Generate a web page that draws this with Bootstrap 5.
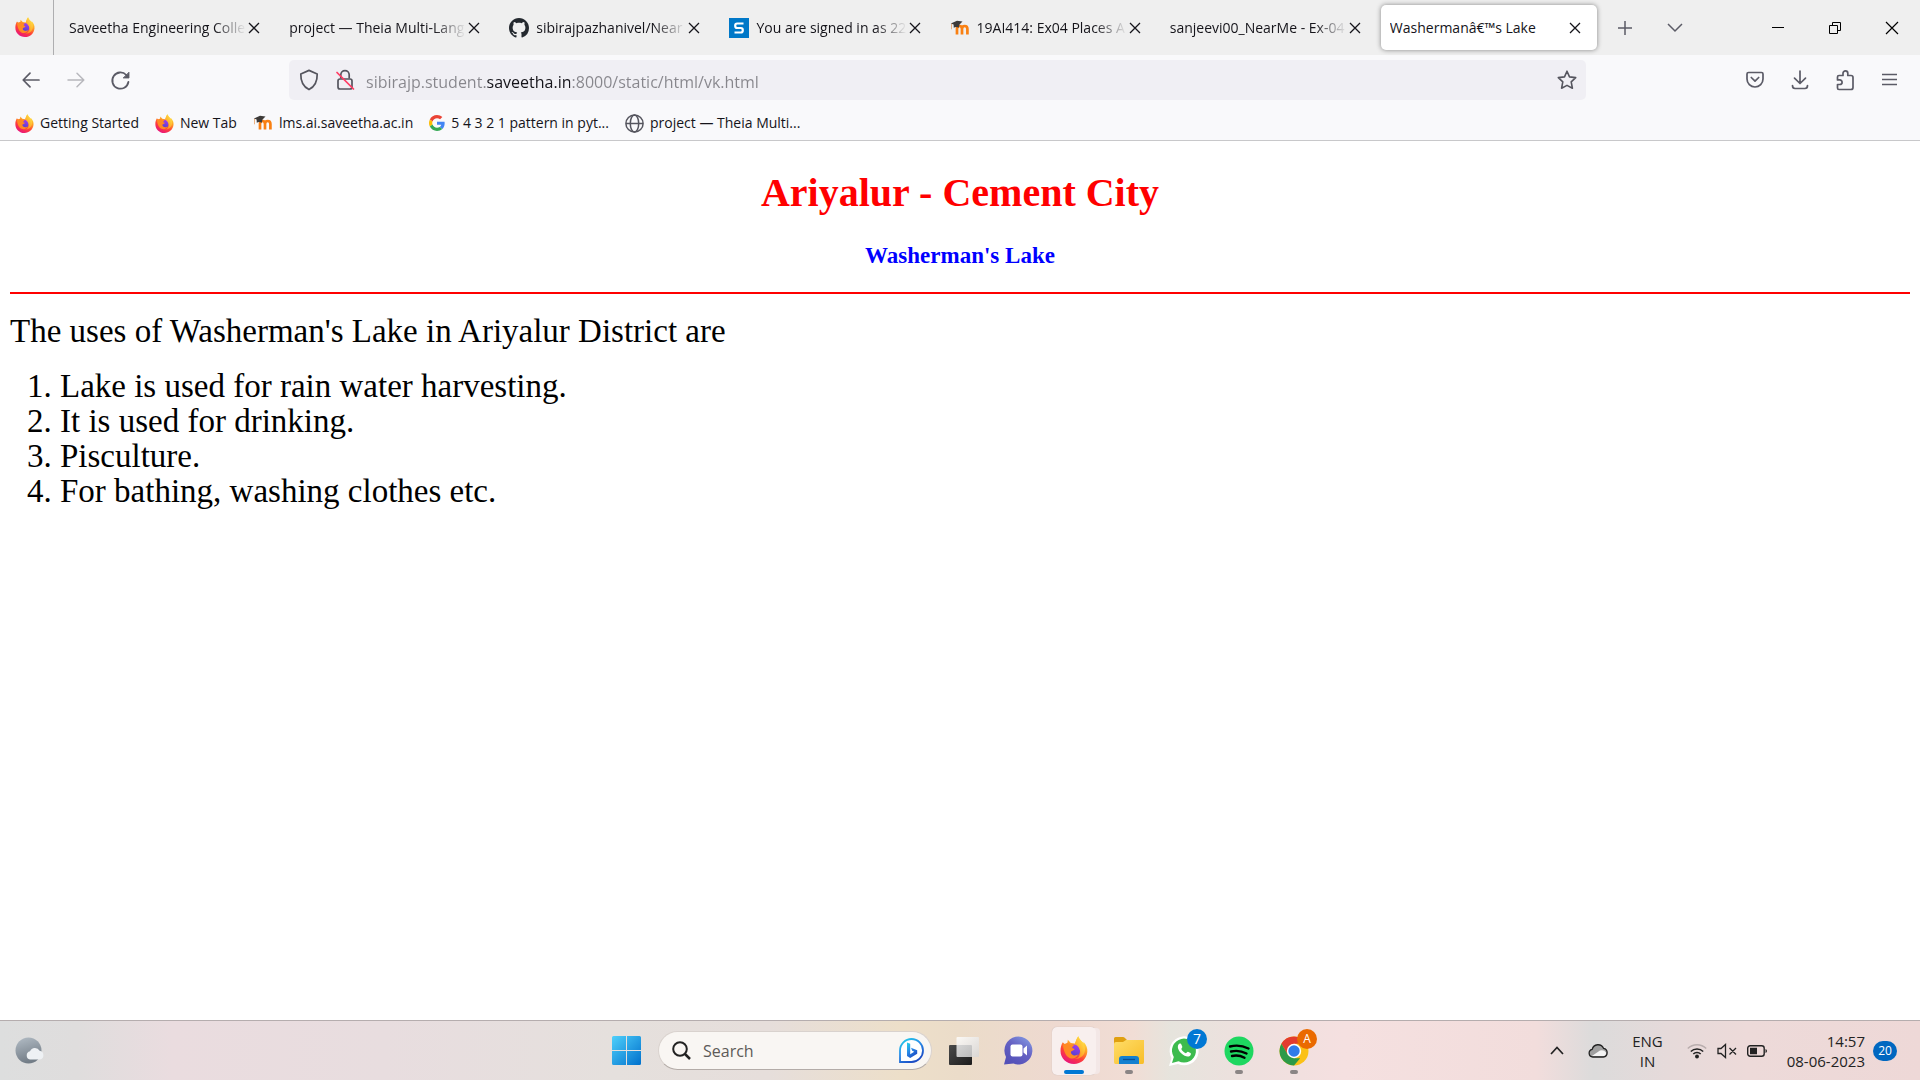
<!DOCTYPE html>
<html lang="en">
<head>
<meta charset="utf-8">
<meta name="viewport" content="width=device-width, initial-scale=1">
<title>Washerman's Lake</title>
<link href="https://cdn.jsdelivr.net/npm/bootstrap@5.3.0/dist/css/bootstrap.min.css" rel="stylesheet">
<style>
  body { font-family: "Open Sans", "Noto Sans", sans-serif; font-size: 14px; line-height: 20px; color: #15141a; background: #fff; }
  svg { display: block; flex: none; overflow: visible; }
  button { font: inherit; color: inherit; background: none; border: 0; padding: 0; }

  /* tab strip */
  .tabstrip { background: #efefef; height: 55px; }
  .pinned-tab { width: 54px; border-right: 1px solid #aeaeb0; padding-right: 13px; padding-left: 15px; }
  .tab-row { flex: 1 1 0; max-width: 1543px; padding-left: 6px; gap: 4px; min-width: 0; }
  .browser-tab { flex: 1 1 0; min-width: 0; height: 45px; padding: 0 14px 0 9px; border-radius: 5px; }
  .browser-tab a { color: inherit; text-decoration: none; gap: 7px; min-width: 0; }
  .tab-title { flex: 1 1 0; min-width: 0; overflow: hidden; white-space: nowrap; }
  .faded { -webkit-mask-image: linear-gradient(to left, transparent, #000 32px); mask-image: linear-gradient(to left, transparent, #000 32px); }
  .is-current { background: #fff; box-shadow: 0 0 5px rgba(0,0,0,.45); }
  .tab-close { width: 16px; height: 24px; }
  .strip-btn { width: 44px; height: 45px; margin-left: 6px; color: #5b5b66; }
  .win-btn { width: 57px; height: 45px; }

  /* navigation and bookmarks */
  .chrome-bars { background: #f9f9fb; border-bottom: 1px solid #c8c8ca; color: #5b5b66; }
  .nav-row { padding: 5px 8px; height: 50px; }
  .tool-btn { width: 45px; height: 40px; }
  .bar-space { flex: 0 1 146px; }
  .url-box { flex: 1 1 0; background: #f0eff4; border-radius: 5px; height: 40px; padding: 0 9px; }
  .url-input { border: 0; outline: 0; font-size: 16px; line-height: 24px; padding: 0; height: 24px; min-width: 0; margin-top: 3px; margin-left: 12px;
    background: linear-gradient(to right, #87868c 0 121px, #15141a 121px 204px, #87868c 204px); -webkit-background-clip: text; background-clip: text; color: transparent; }
  .bookmark-row { height: 35px; padding: 1px 15px 0; gap: 16px; }
  .bookmark-row a { color: #15141a; text-decoration: none; gap: 6px; white-space: nowrap; }

  /* page */
  .site-page { font-family: "Liberation Serif", serif; padding: 29px 10px; color: #000; }
  .page-heading { font-size: 40px; line-height: 46px; font-weight: 700; color: #f00; margin: 0 0 26px; }
  .page-subheading { font-size: 23px; line-height: 27px; font-weight: 700; color: #00f; margin: 0 0 23px; }
  .page-rule { border: 0; height: 2px; background: #f00; opacity: 1; margin: 0 0 20px; }
  .page-copy { font-size: 33px; line-height: 35px; margin: 0 0 20px; }
  .page-copy ol { padding-left: 50px; margin: 0; }

  /* taskbar */
  .taskbar { height: 60px; border-top: 1px solid #b5adae; color: #222;
    background: linear-gradient(to right, #dddede 0, #dfdddd 4%, #eadcdf 9%, #e8dddf 20%, #e5e0dd 32%, #e6dedb 40%, #eddfc9 47%, #ebdcc9 50%, #eed9d0 55%, #f1ddd5 59%, #e6e4dd 61%, #eee0de 65%, #f5e0e0 70%, #f2dddc 80%, #dcdbdb 83%, #e6dada 87%, #eddad9 91%, #eed8d7 100%); }
  .side-zone { flex: 1 1 0; min-width: 0; }
  .task-slot { width: 55px; height: 59px; position: relative; }
  .open-dot::after { content: ""; position: absolute; left: 24px; bottom: 6px; width: 8px; height: 4px; border-radius: 2px; background: #8b8585; }
  .task-current .task-tile { width: 44px; height: 48px; border-radius: 5px; background: #f8efee; box-shadow: 5px 0 0 -1px #f3e7e6, 0 0 1px #b9aaaa; }
  .task-current::after { content: ""; position: absolute; left: 18px; bottom: 6px; width: 20px; height: 4px; border-radius: 2px; background: #0078d4; }
  .search-pill { width: 274px; height: 39px; border-radius: 20px; background: #f9f6f3; border: 1px solid #d9d2ce; border-bottom-color: #b4aca8; padding: 0 7px 0 13px; margin: 0 4px 0 4px; }
  .search-field { border: 0; outline: 0; background: none; min-width: 0; padding: 0; margin-left: 12px; font-size: 16px; line-height: 24px; }
  .search-field::placeholder { color: #5d5a58; opacity: 1; }
  .count-badge { position: absolute; right: 4px; top: 8px; width: 20px; height: 20px; border-radius: 50%; color: #fff; background: #0078d4; font-size: 14px; line-height: 20px; text-align: center; }
  .profile-badge { background: #ea6a00; font-size: 12px; }
  .tray-btn { height: 59px; }
  .tray-label { font-size: 15px; }
  .status-icons { gap: 10px; margin-right: 20px; }
  .notice-count { margin-right: 23px; width: 24px; height: 20px; border-radius: 10px; background: #0067c0; color: #fff; font-size: 12px; line-height: 20px; }
</style>
<script src="https://cdn.jsdelivr.net/npm/bootstrap@5.3.0/dist/js/bootstrap.bundle.min.js"></script>
</head>
<body class="d-flex flex-column min-vh-100">

<svg width="0" height="0" class="position-absolute" aria-hidden="true">
  <defs>
    <linearGradient id="ffBody" x1=".8" y1=".05" x2=".3" y2="1"><stop offset="0" stop-color="#fff44f"/><stop offset=".35" stop-color="#ffa024"/><stop offset=".65" stop-color="#ff4038"/><stop offset="1" stop-color="#e7127f"/></linearGradient>
    <linearGradient id="ffCore" x1=".7" y1="0" x2=".3" y2="1"><stop offset="0" stop-color="#a43cf0"/><stop offset="1" stop-color="#4a42c8"/></linearGradient>
    <linearGradient id="ffTail" x1="1" y1="0" x2=".3" y2="1"><stop offset="0" stop-color="#fff44f"/><stop offset="1" stop-color="#ff8a1c"/></linearGradient>
    <linearGradient id="winBlue" gradientUnits="userSpaceOnUse" x1="0" y1="0" x2="29" y2="29"><stop offset="0" stop-color="#4fd0fb"/><stop offset="1" stop-color="#0070cc"/></linearGradient>
    <linearGradient id="bingBlue" x1="0" y1="0" x2=".6" y2="1"><stop offset="0" stop-color="#21d3e8"/><stop offset=".5" stop-color="#2a8ce8"/><stop offset="1" stop-color="#1b4bc4"/></linearGradient>
    <linearGradient id="chatPurple" x1="1" y1="0" x2=".3" y2="1"><stop offset="0" stop-color="#88a4e8"/><stop offset=".5" stop-color="#6662c4"/><stop offset="1" stop-color="#5350b8"/></linearGradient>
    <linearGradient id="folderGold" x1="0" y1="0" x2="1" y2="1"><stop offset="0" stop-color="#ffdd68"/><stop offset="1" stop-color="#f8bd28"/></linearGradient>
    <linearGradient id="moonGrey" x1="0" y1="0" x2=".3" y2="1"><stop offset="0" stop-color="#b3bdc6"/><stop offset="1" stop-color="#737d87"/></linearGradient>
    <linearGradient id="darkPane" x1="0" y1="0" x2="1" y2="1"><stop offset="0" stop-color="#4a4a4a"/><stop offset="1" stop-color="#1c1c1c"/></linearGradient>
    <linearGradient id="lightPane" x1="0" y1="0" x2="1" y2="1"><stop offset="0" stop-color="#fff"/><stop offset="1" stop-color="#d6d6d6"/></linearGradient>
    <symbol id="firefox" viewBox="0 0 28 28">
      <path fill="url(#ffBody)" d="M2.8 6.2 5 8.4l2.5-1.9.3-2.7 3 3.2 4.2.6C16 5 16.500 2.500 18.300.200c.8 2.400 2.200 3.900 4 5.700l1.200 1.500V5.800c3 3.400 4.200 6.300 3.800 10.200C26.600 23 21 28 14 28 6.400 28 .5 22.300.5 15c0-3.400.8-6.500 2.300-8.800z"/>
      <circle cx="13.800" cy="14.800" r="6.300" fill="url(#ffCore)"/>
      <path fill="url(#ffTail)" d="M15 7.600C16 5 16.500 2.500 18.300.200c.8 2.400 2.200 3.900 4 5.700 2.500 3 3.400 6.600 2.300 10.400-1.200 4.300-5.400 7-10 6.600 4.500-1 6.500-4.600 5.400-8.500-.7-2.600-2.200-4.300-5-6.800z"/>
      <path fill="#ff8a22" d="M3 8.800c2.200-1.800 5.300-1.700 7.400.1 1.600-.5 3-.3 4 .3-1.300.5-1.900 1.300-2.300 2.500.5 1 2.300.8 2.500 1.500-.5 1.200-2.600 1.400-3.500 2.400-.8 1 .4 3 2.300 3.700 2.200.7 3.700-.4 4.800-1-1 3.500-5 5.200-8.700 3.600C5.600 20.200 3.400 14.600 3 8.800z"/>
    </symbol>
    <symbol id="moodle" viewBox="0 0 20 20">
      <path d="M7 16.500v-5.500q0-3 2.500-3t2.500 3v5.500m0-5.500q0-3 2.700-3t2.700 3v5.500" fill="none" stroke="#f98012" stroke-width="2.700"/>
      <path d="M.8 5.500 7 2.800l5.500.7-3 3-.8 3.200c-2-.9-3.500-.8-4.900.1l-.2-3.200z" fill="#3d3a38"/><path d="M1.500 5.800v5.500" stroke="#e6a066" stroke-width=".8"/>
    </symbol>
    <symbol id="cross" viewBox="0 0 12 12"><path d="m1 1 10 10M11 1 1 11" stroke="#15141a" stroke-width="1.300" fill="none"/></symbol>
  </defs>
</svg>

<header>
  <div class="tabstrip d-flex align-items-center">
    <a href="#" class="pinned-tab d-flex align-items-center align-self-stretch" aria-label="Firefox View"><svg width="20" height="24"><use href="#firefox" width="20" height="20" y="1"/></svg></a>
    <nav class="tab-row d-flex" aria-label="Tabs">
      <div class="browser-tab d-flex align-items-center"><a href="#" class="d-flex align-items-center flex-grow-1"><span class="tab-title faded">Saveetha Engineering Colle</span></a><button class="tab-close d-flex align-items-center justify-content-center" aria-label="Close tab"><svg width="12" height="12"><use href="#cross"/></svg></button></div>
      <div class="browser-tab d-flex align-items-center"><a href="#" class="d-flex align-items-center flex-grow-1"><span class="tab-title faded">project — Theia Multi-Lang</span></a><button class="tab-close d-flex align-items-center justify-content-center" aria-label="Close tab"><svg width="12" height="12"><use href="#cross"/></svg></button></div>
      <div class="browser-tab d-flex align-items-center"><a href="#" class="d-flex align-items-center flex-grow-1"><svg width="20" height="20" viewBox="0 0 16 16"><path fill="#24292f" d="M8 0C3.580 0 0 3.580 0 8c0 3.540 2.290 6.530 5.470 7.590.4.070.55-.17.55-.38 0-.19-.01-.82-.01-1.490-2.010.37-2.530-.49-2.690-.94-.09-.23-.48-.94-.82-1.130-.28-.15-.68-.52-.01-.53.63-.01 1.080.58 1.230.82.72 1.210 1.870.87 2.330.66.07-.52.28-.87.51-1.070-1.780-.2-3.640-.89-3.640-3.950 0-.87.31-1.590.82-2.150-.08-.2-.36-1.020.08-2.120 0 0 .67-.21 2.200.82.64-.18 1.320-.27 2-.27s1.360.09 2 .27c1.530-1.040 2.200-.82 2.200-.82.44 1.100.16 1.920.08 2.120.51.56.82 1.270.82 2.150 0 3.070-1.870 3.750-3.650 3.950.29.25.54.73.54 1.480 0 1.070-.01 1.930-.01 2.200 0 .21.15.46.55.38A8.010 8.010 0 0 0 16 8c0-4.420-3.580-8-8-8z"/></svg><span class="tab-title faded">sibirajpazhanivel/Near</span></a><button class="tab-close d-flex align-items-center justify-content-center" aria-label="Close tab"><svg width="12" height="12"><use href="#cross"/></svg></button></div>
      <div class="browser-tab d-flex align-items-center"><a href="#" class="d-flex align-items-center flex-grow-1"><svg width="20" height="20" viewBox="0 0 20 20"><path fill="#0078c8" d="M0 0h20v20H0z"/><path d="M14.500 5.500H8.200q-2 0-2 2.200T8.200 10h3.600q2 0 2 2.200t-2 2.300H5.500" fill="none" stroke="#fff" stroke-width="2.200"/></svg><span class="tab-title faded">You are signed in as 22</span></a><button class="tab-close d-flex align-items-center justify-content-center" aria-label="Close tab"><svg width="12" height="12"><use href="#cross"/></svg></button></div>
      <div class="browser-tab d-flex align-items-center"><a href="#" class="d-flex align-items-center flex-grow-1"><svg width="20" height="20"><use href="#moodle"/></svg><span class="tab-title faded">19AI414: Ex04 Places A</span></a><button class="tab-close d-flex align-items-center justify-content-center" aria-label="Close tab"><svg width="12" height="12"><use href="#cross"/></svg></button></div>
      <div class="browser-tab d-flex align-items-center"><a href="#" class="d-flex align-items-center flex-grow-1"><span class="tab-title faded">sanjeevi00_NearMe - Ex-04</span></a><button class="tab-close d-flex align-items-center justify-content-center" aria-label="Close tab"><svg width="12" height="12"><use href="#cross"/></svg></button></div>
      <div class="browser-tab is-current d-flex align-items-center"><a href="#" class="d-flex align-items-center flex-grow-1" aria-current="page"><span class="tab-title">Washermanâ€™s Lake</span></a><button class="tab-close d-flex align-items-center justify-content-center" aria-label="Close tab"><svg width="12" height="12"><use href="#cross"/></svg></button></div>
    </nav>
    <button class="strip-btn d-flex align-items-center justify-content-center" aria-label="New tab"><svg width="16" height="16" viewBox="0 0 16 16"><path d="M8 1v14M1 8h14" stroke="currentColor" stroke-width="1.500"/></svg></button>
    <button class="strip-btn d-flex align-items-center justify-content-center" aria-label="List all tabs"><svg width="16" height="16" viewBox="0 0 16 16"><path d="m1 4 7 7 7-7" fill="none" stroke="currentColor" stroke-width="1.500"/></svg></button>
    <div class="d-flex ms-auto">
      <button class="win-btn d-flex align-items-center justify-content-center" aria-label="Minimize"><svg width="12" height="12" viewBox="0 0 12 12"><path d="M0 5.500h12" stroke="#000"/></svg></button>
      <button class="win-btn d-flex align-items-center justify-content-center" aria-label="Restore"><svg width="12" height="12" viewBox="0 0 12 12"><path d="M.5 3.500h8v8h-8zM3.500 3V.5h8v8H9" fill="none" stroke="#000"/></svg></button>
      <button class="win-btn d-flex align-items-center justify-content-center" aria-label="Close"><svg width="14" height="14" viewBox="0 0 14 14"><path d="m1 1 12 12M13 1 1 13" stroke="#000" stroke-width="1.200"/></svg></button>
    </div>
  </div>

  <div class="chrome-bars">
    <div class="nav-row d-flex align-items-center">
      <button class="tool-btn d-flex align-items-center justify-content-center" aria-label="Back"><svg width="18" height="16" viewBox="0 0 18 16" fill="none" stroke="currentColor" stroke-width="1.700" stroke-linecap="round" stroke-linejoin="round"><path d="M17 8H1.500M8 1.200 1.200 8 8 14.800"/></svg></button>
      <button class="tool-btn d-flex align-items-center justify-content-center opacity-50" aria-label="Forward"><svg width="18" height="16" viewBox="0 0 18 16" fill="none" stroke="#77777f" stroke-width="1.500" stroke-linecap="round" stroke-linejoin="round"><path d="M1 8h15.500M10 1.200 16.800 8 10 14.800"/></svg></button>
      <button class="tool-btn d-flex align-items-center justify-content-center" aria-label="Reload"><svg width="19" height="19" viewBox="0 0 19 19" fill="none" stroke="currentColor" stroke-width="1.800" stroke-linecap="round"><path d="M17.400 11A8.100 8.100 0 1 1 15.300 4"/><path d="M18 1.500V7h-5.500z" fill="currentColor" stroke-width=".8"/></svg></button>
      <div class="bar-space"></div>
      <div class="url-box d-flex align-items-center">
        <button aria-label="Tracking protection"><svg width="22" height="22" viewBox="0 0 22 22" fill="none" stroke="#55555e" stroke-width="1.700" stroke-linejoin="round"><path d="M11 1.400 19.200 5c.2 6.500-2.200 12.500-8.200 15.600C5 17.500 2.600 11.500 2.800 5z"/></svg></button>
        <button class="ms-3" aria-label="Connection not secure"><svg width="18" height="22" viewBox="0 0 18 22" fill="none" stroke="#55555e" stroke-width="1.700"><rect x="2" y="10" width="14" height="10" rx="2"/><path d="M4.800 9.500V5.800a4.200 4.200 0 0 1 8.400 0v3.700"/><path d="M1 3.500 17.500 20" stroke="#ff3b62" stroke-linecap="round"/></svg></button>
        <label class="visually-hidden" for="address">Address</label>
        <input id="address" class="url-input flex-grow-1" type="text" value="sibirajp.student.saveetha.in:8000/static/html/vk.html">
        <button aria-label="Bookmark this page"><svg width="20" height="20" viewBox="0 0 20 20" fill="none" stroke="#55555e" stroke-width="1.600" stroke-linejoin="round"><path d="m10 1.200 2.500 5.700 6.200.7-4.500 4.200 1.200 6.400L10 15.400l-5.400 2.800 1.200-6.400-4.500-4.200 6.200-.7z"/></svg></button>
      </div>
      <div class="bar-space"></div>
      <button class="tool-btn d-flex align-items-center justify-content-center" aria-label="Save to Pocket"><svg width="18" height="18" viewBox="0 0 18 18" fill="none" stroke="currentColor" stroke-width="1.700" stroke-linecap="round" stroke-linejoin="round"><path d="M2.500 1.500h13q1.500 0 1.500 1.500v5a8 8 0 0 1-16 0V3q0-1.500 1.500-1.500z"/><path d="m5.300 6.500 3.700 3.700 3.700-3.700"/></svg></button>
      <button class="tool-btn d-flex align-items-center justify-content-center" aria-label="Downloads"><svg width="18" height="20" viewBox="0 0 18 20" fill="none" stroke="currentColor" stroke-width="1.700" stroke-linecap="round" stroke-linejoin="round"><path d="M9 1v12M3.500 8.200 9 13.500l5.500-5.300M1.500 15.500q0 3 2.500 3h10q2.500 0 2.500-3"/></svg></button>
      <button class="tool-btn d-flex align-items-center justify-content-center" aria-label="Extensions"><svg width="18" height="20" viewBox="0 0 18 20" fill="none" stroke="currentColor" stroke-width="1.700" stroke-linejoin="round"><path d="M7 5.500V3.300a2.400 2.400 0 0 1 4.800 0v2.200H15q2 0 2 2v10q0 2-2 2H3q-1.500 0-1.500-1.500v-3.500h2.300a2.300 2.300 0 0 0 0-4.600H1.500V7Q1.500 5.500 3 5.500z"/></svg></button>
      <button class="tool-btn d-flex align-items-center justify-content-center" aria-label="Open menu"><svg width="15" height="14" viewBox="0 0 15 14" stroke="currentColor" stroke-width="1.500"><path d="M0 1.500h15M0 6.500h15M0 11.500h15"/></svg></button>
    </div>

    <nav class="bookmark-row d-flex align-items-center" aria-label="Bookmarks">
      <a href="#" class="d-flex align-items-center"><svg width="19" height="19"><use href="#firefox"/></svg>Getting Started</a>
      <a href="#" class="d-flex align-items-center"><svg width="19" height="19"><use href="#firefox"/></svg>New Tab</a>
      <a href="#" class="d-flex align-items-center"><svg width="20" height="20"><use href="#moodle"/></svg>lms.ai.saveetha.ac.in</a>
      <a href="#" class="d-flex align-items-center"><svg width="16" height="16" viewBox="0 0 48 48"><path fill="#ea4335" d="M24 9.500c3.540 0 6.710 1.220 9.210 3.600l6.850-6.850C35.900 2.380 30.470 0 24 0 14.620 0 6.510 5.380 2.560 13.220l7.980 6.190C12.430 13.720 17.740 9.500 24 9.500z"/><path fill="#4285f4" d="M46.980 24.550c0-1.570-.15-3.090-.38-4.550H24v9.020h12.940c-.58 2.960-2.260 5.480-4.780 7.180l7.730 6c4.510-4.180 7.090-10.360 7.090-17.650z"/><path fill="#fbbc05" d="M10.530 28.590A14.500 14.500 0 0 1 9.770 24c0-1.600.27-3.140.76-4.590l-7.980-6.190A23.900 23.900 0 0 0 0 24c0 3.880.92 7.540 2.560 10.780z"/><path fill="#34a853" d="M24 48c6.480 0 11.930-2.130 15.890-5.810l-7.730-6c-2.150 1.450-4.920 2.300-8.160 2.300-6.260 0-11.570-4.220-13.470-9.910l-7.980 6.190C6.510 42.620 14.620 48 24 48z"/></svg>5 4 3 2 1 pattern in pyt...</a>
      <a href="#" class="d-flex align-items-center"><svg width="19" height="19" viewBox="0 0 19 19" fill="none" stroke="#55555e" stroke-width="1.500"><circle cx="9.500" cy="9.500" r="8.600"/><ellipse cx="9.500" cy="9.500" rx="4.200" ry="8.600"/><path d="M1 9.500h17"/></svg>project — Theia Multi...</a>
    </nav>
  </div>
</header>

<main class="site-page flex-grow-1">
  <h1 class="page-heading text-center">Ariyalur - Cement City</h1>
  <h3 class="page-subheading text-center">Washerman's Lake</h3>
  <hr class="page-rule">
  <p class="page-copy">The uses of Washerman's Lake in Ariyalur District are</p>
  <div class="page-copy">
    <ol>
      <li>Lake is used for rain water harvesting.</li>
      <li>It is used for drinking.</li>
      <li>Pisculture.</li>
      <li>For bathing, washing clothes etc.</li>
    </ol>
  </div>
</main>

<footer class="taskbar d-flex align-items-center">
  <div class="side-zone">
    <button class="ms-3 d-block" aria-label="Weather"><svg width="28" height="27" viewBox="0 0 28 27"><circle cx="12.500" cy="13.500" r="13" fill="url(#moonGrey)"/><path d="M14 22.500a4.200 4.200 0 0 1 0-8.200 5.300 5.300 0 0 1 9.600-.6 4.500 4.500 0 0 1 .4 8.800z" fill="#eef1f4"/></svg></button>
  </div>

  <nav class="d-flex align-items-center" aria-label="Taskbar">
    <button class="task-slot d-flex align-items-center justify-content-center" aria-label="Start"><svg width="29" height="29" viewBox="0 0 29 29"><path fill="url(#winBlue)" d="M1.500 0H14v14H0V1.500Q0 0 1.500 0zM15 0h12.500Q29 0 29 1.500V14H15zM0 15h14v14H1.500Q0 29 0 27.500zM15 15h14v12.500q0 1.500-1.500 1.500H15z"/></svg></button>
    <div class="search-pill d-flex align-items-center">
      <svg width="19" height="19" viewBox="0 0 19 19" fill="none" stroke="#222" stroke-width="2"><circle cx="8" cy="8" r="6.800"/><path d="m13 13 5 5" stroke-width="2.500"/></svg>
      <label class="visually-hidden" for="task-search">Search</label>
      <input id="task-search" class="search-field flex-grow-1" type="text" placeholder="Search">
      <button aria-label="Bing chat"><svg width="25" height="25" viewBox="0 0 25 25"><path d="M1 24V12.500A11.500 11.500 0 1 1 12.500 24z" fill="#fff" stroke="url(#bingBlue)" stroke-width="1.800"/><path d="m8 4.500 3.200 1.300v10.500l4-2.500-2-1-1.200-3 6.200 2.500v3.400L11.200 20 8 18z" fill="url(#bingBlue)"/></svg></button>
    </div>
    <button class="task-slot d-flex align-items-center justify-content-center" aria-label="Task view"><svg width="30" height="28" viewBox="0 0 30 28"><rect y="8" width="23" height="20" rx="1" fill="url(#darkPane)"/><rect x="7.500" width="22.500" height="20" rx="1" fill="url(#lightPane)" opacity=".82"/></svg></button>
    <button class="task-slot d-flex align-items-center justify-content-center" aria-label="Chat"><svg width="29" height="29" viewBox="0 0 29 29"><path d="M0 28.500 2 21A14 14 0 1 1 9.500 27.600z" fill="url(#chatPurple)"/><rect x="6.500" y="8.500" width="12" height="12" rx="2" fill="#fff"/><path d="m19.500 12.500 3.500-3v10l-3.500-3z" fill="#fff"/></svg></button>
    <button class="task-slot task-current d-flex align-items-center justify-content-center" aria-label="Firefox"><span class="task-tile d-flex align-items-center justify-content-center"><svg width="28" height="29"><use href="#firefox" width="28" height="28"/></svg></span></button>
    <button class="task-slot open-dot d-flex align-items-center justify-content-center" aria-label="File Explorer"><svg width="30" height="27" viewBox="0 0 30 27"><path d="M0 7V1.500Q0 0 1.500 0H9q1 0 1.700.7L13 3h15q2 0 2 2v4H0z" fill="#e0a011"/><path d="M0 7q0-2 2-2h7l3-2h18v22q0 2-1.500 2h-27Q0 27 0 25z" fill="url(#folderGold)"/><path d="M5 27v-5q0-3 3-3h14q3 0 3 3v5z" fill="#1480d0"/><path d="M9 22.500h12" stroke="#0b4f96" stroke-width="1.300"/></svg></button>
    <button class="task-slot d-flex align-items-center justify-content-center" aria-label="WhatsApp"><svg width="30" height="30" viewBox="0 0 30 30"><path d="M0 30 2.500 22A14.500 14.500 0 1 1 9 28z" fill="#fff"/><path d="m3 27 1.800-6A12 12 0 1 1 9.500 25.300z" fill="#3dbb4e"/><path d="M9.500 8.500c1-1.500 2.500-1 3 .3l.8 2c.3.800-1 1.700-1 2.200 1 2 2.500 3.400 4.500 4.200.6 0 1.500-1.800 2.200-1.500l2.500 1.200c.8.500.3 2.200-.7 3-2 1.500-5.500.3-8.300-2.300s-4.700-6.400-3-9.100z" fill="#fff"/></svg><span class="count-badge">7</span></button>
    <button class="task-slot open-dot d-flex align-items-center justify-content-center" aria-label="Spotify"><svg width="30" height="30" viewBox="0 0 30 30"><circle cx="15" cy="15" r="14.500" fill="#1ed760"/><path d="M6 10.500q9.500-2.500 18.500 2M7 15.500q8-2 15.500 2M8 20q6.500-1.500 12.500 1.700" fill="none" stroke="#000" stroke-linecap="round" stroke-width="2.400"/></svg></button>
    <button class="task-slot open-dot d-flex align-items-center justify-content-center" aria-label="Chrome"><svg width="30" height="30" viewBox="0 0 30 30"><circle cx="15" cy="15" r="14.500" fill="#fbc116"/><path d="M2.400 7.800A14.500 14.500 0 0 1 27.600 7.800H15L8.800 18.600z" fill="#e33b2e"/><path d="M2.400 7.800 8.800 18.600 15 22.200h6.200L15 29.500A14.500 14.500 0 0 1 2.400 7.800z" fill="#2d9a48"/><circle cx="15" cy="15" r="7.200" fill="#fff"/><circle cx="15" cy="15" r="5.700" fill="#2f7bea"/></svg><span class="count-badge profile-badge">A</span></button>
  </nav>

  <div class="side-zone d-flex align-items-center justify-content-end">
    <button class="tray-btn" aria-label="Show hidden icons"><svg width="14" height="9" viewBox="0 0 14 9"><path d="m1 8 6-6.500L13 8" fill="none" stroke="#222" stroke-width="1.700"/></svg></button>
    <button class="tray-btn ms-4" aria-label="OneDrive"><svg width="20" height="15" viewBox="0 0 20 15"><path d="M4.800 14a3.900 3.900 0 0 1-.6-7.700 6 6 0 0 1 11.300-1A4.400 4.400 0 0 1 15.300 14z" fill="#a0a0a0"/><path d="m3.500 13.300 8.500-5.800q4-1 6 2 .5 3-2.700 3.800z" fill="#f4f4f4"/><path d="M4.800 14a3.900 3.900 0 0 1-.6-7.700 6 6 0 0 1 11.300-1A4.400 4.400 0 0 1 15.300 14z" fill="none" stroke="#222" stroke-width="1.300"/></svg></button>
    <button class="tray-btn tray-label ms-4 text-center" aria-label="Input language">ENG<br>IN</button>
    <button class="tray-btn status-icons d-flex align-items-center ms-4" aria-label="Network, volume and battery">
      <svg width="20" height="16" viewBox="0 0 20 16" fill="none" stroke="#222" stroke-width="1.500"><path d="M.8 5.500a13 13 0 0 1 18.400 0" stroke="#b9aeae"/><path d="M3.800 8.500a8.800 8.800 0 0 1 12.400 0M6.300 11a5.200 5.200 0 0 1 7.400 0"/><circle cx="10" cy="13.500" r="1.200" fill="#222"/></svg>
      <svg width="20" height="16" viewBox="0 0 20 16" fill="none" stroke="#222" stroke-width="1.300"><path d="M1 5.500h3l4.500-4v13l-4.500-4H1zM12.500 5l6.500 6.500M19 5l-6.500 6.500"/></svg>
      <svg width="20" height="12" viewBox="0 0 20 12"><rect x=".7" y=".7" width="16.500" height="10.600" rx="2.500" fill="none" stroke="#222" stroke-width="1.400"/><path d="M3 2.800h7v6.400H3zM18.500 4q1.500.5 1.500 2t-1.500 2z" fill="#222"/></svg>
    </button>
    <button class="tray-btn tray-label text-end">14:57<br>08-06-2023</button>
    <button class="notice-count ms-2" aria-label="20 notifications">20</button>
  </div>
</footer>
</body>
</html>
